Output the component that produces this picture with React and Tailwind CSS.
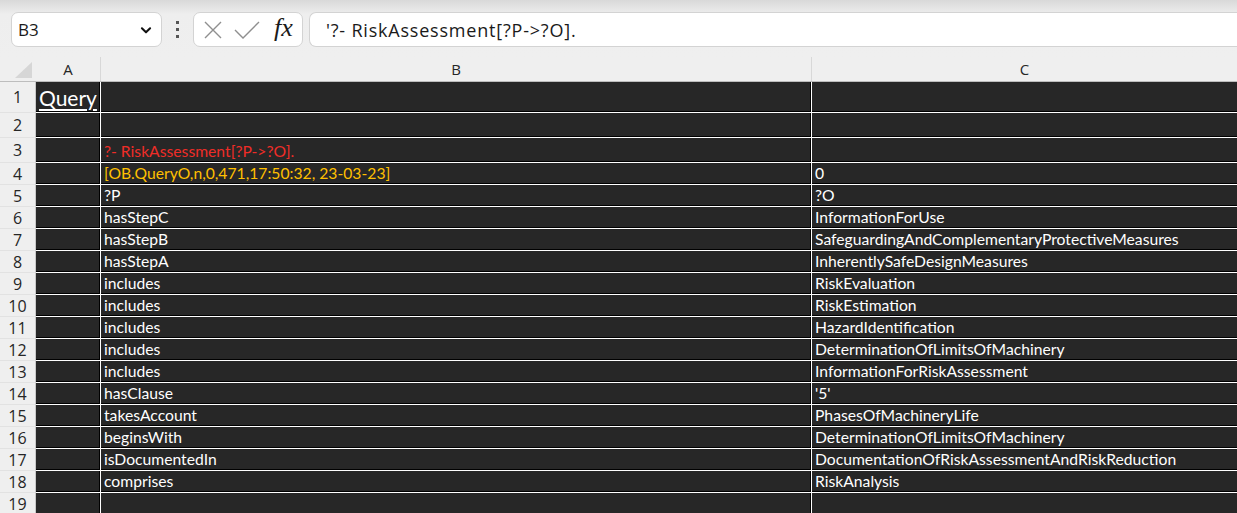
import React from "react";

const rows = [
  { n: 1, h: "h-[31px]", a: "Query" },
  { n: 2, h: "h-[25px]" },
  { n: 3, h: "h-[25px]", b: "?- RiskAssessment[?P->?O].", bc: "text-[#ef2d27]" },
  { n: 4, h: "h-[22px]", b: "[OB.QueryO,n,0,471,17:50:32, 23-03-23]", bc: "text-[#ffc000]", c: "0" },
  { n: 5, h: "h-[22px]", b: "?P", c: "?O" },
  { n: 6, h: "h-[22px]", b: "hasStepC", c: "InformationForUse" },
  { n: 7, h: "h-[22px]", b: "hasStepB", c: "SafeguardingAndComplementaryProtectiveMeasures" },
  { n: 8, h: "h-[22px]", b: "hasStepA", c: "InherentlySafeDesignMeasures" },
  { n: 9, h: "h-[22px]", b: "includes", c: "RiskEvaluation" },
  { n: 10, h: "h-[22px]", b: "includes", c: "RiskEstimation" },
  { n: 11, h: "h-[22px]", b: "includes", c: "HazardIdentification" },
  { n: 12, h: "h-[22px]", b: "includes", c: "DeterminationOfLimitsOfMachinery" },
  { n: 13, h: "h-[22px]", b: "includes", c: "InformationForRiskAssessment" },
  { n: 14, h: "h-[22px]", b: "hasClause", c: "'5'" },
  { n: 15, h: "h-[22px]", b: "takesAccount", c: "PhasesOfMachineryLife" },
  { n: 16, h: "h-[22px]", b: "beginsWith", c: "DeterminationOfLimitsOfMachinery" },
  { n: 17, h: "h-[22px]", b: "isDocumentedIn", c: "DocumentationOfRiskAssessmentAndRiskReduction" },
  { n: 18, h: "h-[22px]", b: "comprises", c: "RiskAnalysis" },
  { n: 19, h: "h-[22px]" },
];

function Row({ r }) {
  return (
    <div className={`flex ${r.h} shrink-0`}>
      <div className="w-[36px] shrink-0 bg-[#efefef] border-r border-b border-r-[#c8c8c8] border-b-[#e2e2e2] flex items-center justify-center text-[16px] text-[#262626] font-['Open_Sans',sans-serif]">
        {r.n}
      </div>
      <div className="flex flex-1 bg-white gap-px pb-px">
        <div className="w-[64px] shrink-0 bg-[#272727] border-r border-b border-black flex items-center pl-[3px] overflow-visible whitespace-nowrap">
          {r.a && (
            <span className="text-white text-[21px] underline underline-offset-[3px] leading-none pt-[2px] font-['Lato',sans-serif]">
              {r.a}
            </span>
          )}
        </div>
        <div className="w-[710px] shrink-0 bg-[#272727] border-r border-b border-black flex items-end pb-px pl-[3px] whitespace-nowrap">
          {r.b && (
            <span className={`text-[15.7px] leading-none font-['Lato',sans-serif] ${r.bc || "text-white"}`}>{r.b}</span>
          )}
        </div>
        <div className="flex-1 bg-[#272727] border-b border-black flex items-end pb-px pl-[3px] whitespace-nowrap">
          {r.c && <span className="text-[15.7px] leading-none text-white font-['Lato',sans-serif]">{r.c}</span>}
        </div>
      </div>
    </div>
  );
}

export default function App() {
  return (
    <div className="w-[1237px] h-[513px] overflow-hidden bg-[#efefef] flex flex-col font-['Open_Sans',sans-serif]">
      {/* toolbar */}
      <div className="h-[57px] shrink-0 bg-gradient-to-b from-[#d9d9d9] via-[#eeeeee] via-[25%] to-[#efefef] flex items-start pt-[12px] pl-[11px] gap-0">
        <div className="w-[151px] h-[35px] bg-white border border-[#d3d3d3] rounded-[7px] flex items-center justify-between pl-[6px] pr-[8px]">
          <span className="text-[17px] text-[#1a1a1a] leading-none">B3</span>
          <svg width="14" height="14" viewBox="0 0 24 24" fill="none" stroke="#111" strokeWidth="3.5" strokeLinecap="round" strokeLinejoin="round">
            <path d="M5 9l7 7 7-7" />
          </svg>
        </div>
        <div className="w-[31px] h-[35px] flex flex-col items-center justify-center gap-[4px]">
          <div className="w-[3px] h-[3px] bg-[#555]" />
          <div className="w-[3px] h-[3px] bg-[#555]" />
          <div className="w-[3px] h-[3px] bg-[#555]" />
        </div>
        <div className="w-[110px] h-[35px] bg-white border border-[#d3d3d3] rounded-[7px] flex items-center pl-[9px]">
          <svg width="20" height="20" viewBox="0 0 20 20" fill="none" stroke="#8f8f8f" strokeWidth="1.4">
            <path d="M2 2l16 16M18 2L2 18" />
          </svg>
          <svg width="26" height="20" viewBox="0 0 26 20" fill="none" stroke="#8f8f8f" strokeWidth="1.4" className="ml-[11px]">
            <path d="M1 10l8 8L25 2" />
          </svg>
          <span className="ml-[14px] text-[26px] italic leading-none text-[#1a1a1a] font-['Liberation_Serif',serif] -mt-[4px]">fx</span>
        </div>
        <div className="ml-[6px] flex-1 h-[35px] bg-white border border-[#d3d3d3] border-r-0 rounded-l-[7px] flex items-center pl-[16px]">
          <span className="text-[18px] tracking-[0.8px] text-[#1a1a1a] leading-none">'?- RiskAssessment[?P-&gt;?O].</span>
        </div>
      </div>
      {/* column header */}
      <div className="h-[25px] shrink-0 flex border-b border-[#bdbdbd]">
        <div className="w-[36px] shrink-0 relative">
          <svg width="36" height="24" className="absolute left-0 top-0">
            <polygon points="15,21 32,21 32,5" fill="#d6d6d6" />
          </svg>
        </div>
        <div className="w-[65px] shrink-0 border-r border-[#d8d8d8] flex items-center justify-center text-[15px] text-[#262626]">A</div>
        <div className="w-[711px] shrink-0 border-r border-[#d8d8d8] flex items-center justify-center text-[15px] text-[#262626]">B</div>
        <div className="flex-1 flex items-center justify-center text-[15px] text-[#262626]">C</div>
      </div>
      {rows.map((r) => (
        <Row key={r.n} r={r} />
      ))}
    </div>
  );
}
